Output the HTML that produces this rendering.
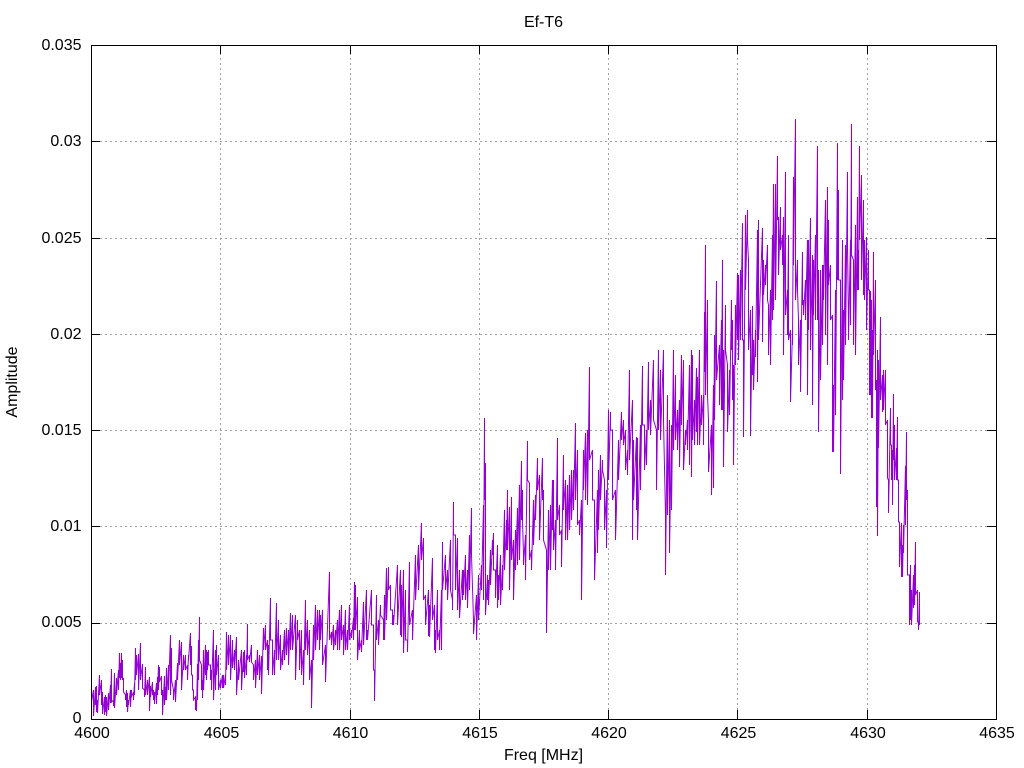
<!DOCTYPE html>
<html><head><meta charset="utf-8"><style>html,body{margin:0;padding:0;background:#fff}svg{display:block}text{font-family:"Liberation Sans",sans-serif;font-size:16px;fill:#000}</style></head><body>
<svg width="1024" height="768" viewBox="0 0 1024 768" xmlns="http://www.w3.org/2000/svg">
<rect width="1024" height="768" fill="#fff"/>
<g stroke="#a0a0a0" stroke-width="1" stroke-dasharray="2 3" fill="none" shape-rendering="crispEdges">
<path d="M100 623.5H988M100 526.5H988M100 430.5H988M100 334.5H988M100 238.5H988M100 141.5H988"/>
<path d="M220.5 710V54M350.5 710V54M479.5 710V54M608.5 710V54M737.5 710V54M867.5 710V54"/>
</g>
<path transform="translate(.5,0)" fill="none" stroke="#9400d3" stroke-width="1" stroke-linejoin="miter" d="M91 672V702L93 690V716L95 687V705L96 686V712L97 700V713L99 675V695L101 680V705L102 692V714L104 697V715L105 695V712L106 697V716L108 693V710L110 685V703L111 669V702L113 700V706L114 673V708L116 678V695L118 670V690L119 653V678L120 663V680L121 653V678L122 660V680L123 678V692L125 695V700L126 690V707L127 693V712L128 700V705L130 690V707L131 690V697L133 692V700L134 683V695L135 648V680L136 655V675L138 654V690L140 643V680L142 664V688L144 690V697L145 667V695L147 680V695L149 677V711L150 686V697L152 682V695L153 690V700L154 692V704L156 683V704L157 677V695L158 665V690L159 667V682L161 676V695L162 690V715L164 676V705L165 687V700L166 668V700L168 665V690L170 635V695L171 648V680L173 690V700L175 680V702L177 663V680L179 640V665L181 642V690L183 655V670L185 655V670L187 665V680L188 655V660L190 633V665L191 646V675L192 675V690L193 690V700L195 697V710L196 700V711L197 664V700L198 640V680L199 617V660L201 665V690L202 680V698L203 650V690L205 645V675L206 650V680L207 652V670L208 650V665L210 665V680L211 670V690L213 630V700L215 650V690L216 645V675L218 655V690L220 680V688L222 675V688L223 675V688L225 675V685L226 632V670L228 635V665L230 635V680L232 640V668L234 650V670L236 637V695L238 660V680L241 650V690L243 652V672L244 650V678L246 655V675L247 624V660L249 655V662L251 645V662L253 665V680L255 660V688L257 650V675L259 655V680L261 656V694L263 628V650L265 625V650L267 640V670L268 645V675L270 598V640L272 640V675L274 650V675L276 603V660L278 620V660L280 635V670L282 650V665L284 630V660L286 628V655L288 630V665L290 613V650L292 615V650L295 615V680L297 620V640L299 630V670L301 630V675L303 650V685L305 600V650L307 620V655L309 630V680L311 660V708L313 625V660L315 605V650L317 610V640L319 610V650L320 615V640L322 610V665L325 645V682L329 572V640L331 632V645L333 625V650L335 630V645L337 620V650L339 610V650L341 605V640L343 625V655L345 610V650L347 630V650L349 605V640L351 630V638L353 618V640L354 582V630L355 585V630L357 597V660L359 630V650L361 640V652L363 602V645L366 590V640L367 630V640L371 590V625L373 625V670L374 670V701L376 595V640L378 620V645L380 605V615L383 620V640L384 595V640L386 568V620L388 567V590L390 585V610L392 610V625L393 615V625L397 565V625L400 570V635L401 585V637L403 570V653L405 590V640L407 640V652L409 562V625L412 610V640L415 555V600L418 545V590L421 523V560L423 538V600L425 595V625L428 590V636L429 605V637L432 558V620L434 605V650L435 630V653L437 590V640L439 630V650L441 590V650L442 542V590L445 555V590L447 570V600L450 540V590L452 600V610L453 502V535L455 535V590L457 538V610L459 570V618L462 570V600L463 570V595L465 555V600L467 570V608L469 535V590L471 508V555L473 620V634L476 595V640L478 575V620L481 565V590L483 505V600L484 418V500L485 463V615L487 575V600L488 580V605L490 550V585L492 540V555L493 533V570L495 570V598L497 545V608L498 575V600L500 555V605L502 565V590L504 510V570L506 520V550L507 490V550L509 507V590L511 497V560L513 540V600L515 530V570L517 508V565L519 485V560L521 461V520L522 490V520L523 555V565L525 535V580L527 441V480L529 483V560L531 550V570L533 500V545L535 495V520L537 458V490L539 475V540L542 458V500L543 490V540L546 550V633L548 510V570L550 505V570L552 480V530L553 480V550L555 520V570L557 438V520L559 505V535L561 530V567L563 455V510L565 480V540L567 485V540L569 475V530L571 470V520L573 470V510L575 423V500L577 450V525L579 520V535L581 500V600L583 450V490L585 433V500L587 430V505L589 367V460L592 450V500L594 500V580L597 490V553L598 470V530L600 455V500L602 460V470L604 480V530L606 490V548L608 410V480L610 412V430L612 430V500L615 490V540L618 440V480L621 412V440L623 420V445L625 430V470L627 450V475L629 370V460L632 400V540L633 440V500L636 437V510L637 438V540L640 425V490L642 366V425L644 425V470L646 430V465L648 362V430L650 400V435L653 360V420L656 430V490L658 350V430L660 370V440L663 350V420L665 515V575L667 395V515L669 420V553L671 425V510L673 350V450L675 375V440L677 410V450L679 400V467L681 355V425L683 360V470L685 430V445L687 420V450L689 365V465L691 350V477L692 355V440L694 400V445L696 368V432L697 377V445L699 350V445L701 395V425L703 395V445L704 312V372L705 245V395L707 300V395L708 420V472L711 425V495L713 385V488L714 335V420L716 281V380L719 345V405L721 320V410L722 260V410L723 350V467L725 305V350L727 365V432L729 370V415L731 300V350L732 320V400L733 365V465L735 305V365L737 273V340L738 275V360L740 270V340L742 223V340L743 340V437L745 215V290L747 210V240L748 260V350L750 310V436L752 306V375L753 340V390L755 330V357L757 230V382L758 220V340L762 228V342L763 260V295L765 265V285L767 245V300L768 305V355L770 290V365L772 235V320L773 184V310L775 184V300L777 156V220L778 217V275L780 207V250L782 235V265L783 217V355L785 172V315L787 290V335L788 235V340L790 330V402L792 330V345L793 177V265L795 119V300L797 260V290L798 320V365L800 320V392L802 252V305L803 300V315L805 280V320L807 240V395L808 240V330L810 218V350L812 255V405L813 260V315L815 235V320L817 146V320L818 270V432L820 270V380L822 265V345L823 265V300L825 200V335L827 187V365L828 220V285L830 265V320L832 315V452L833 385V452L835 290V415L837 143V280L838 190V280L840 280V474L842 240V400L843 310V380L845 245V345L847 172V245L848 320V340L850 240V325L851 124V255L853 260V345L855 225V355L857 197V290L858 250V290L859 146V240L861 175V280L863 200V295L864 240V300L866 237V330L868 250V290L869 290V395L870 291V395L871 300V418L872 330V418L873 252V355L875 280V390L876 380V507L877 350V536L878 360V448L880 317V400L882 375V412L883 370V410L885 370V425L887 420V478L888 480V513L890 408V445L891 445V480L892 450V505L893 394V460L894 425V480L896 448V480L897 417V480L898 480V522L899 522V567L901 523V577L902 545V577L903 525V553L905 466V525L906 432V500L907 490V575L909 575V625L910 565V620L911 590V625L913 575V608L914 565V605L915 542V595L917 590V622L918 622V630L919 592V625"/>
<g stroke="#000" stroke-width="1" fill="none" shape-rendering="crispEdges">
<rect x="91.5" y="45.5" width="905" height="674"/>
<path d="M91 623.5h9M91 526.5h9M91 430.5h9M91 334.5h9M91 238.5h9M91 141.5h9M996 623.5h-9M996 526.5h-9M996 430.5h-9M996 334.5h-9M996 238.5h-9M996 141.5h-9"/>
<path d="M220.5 719v-9M350.5 719v-9M479.5 719v-9M608.5 719v-9M737.5 719v-9M867.5 719v-9M220.5 45v9M350.5 45v9M479.5 45v9M608.5 45v9M737.5 45v9M867.5 45v9"/>
</g>
<g text-anchor="end">
<text x="81.5" y="723">0</text>
<text x="81.5" y="627">0.005</text>
<text x="81.5" y="531">0.01</text>
<text x="81.5" y="435">0.015</text>
<text x="81.5" y="339">0.02</text>
<text x="81.5" y="243">0.025</text>
<text x="81.5" y="146">0.03</text>
<text x="81.5" y="50">0.035</text>
</g>
<g text-anchor="middle">
<text x="92" y="738">4600</text>
<text x="221.5" y="738">4605</text>
<text x="350.5" y="738">4610</text>
<text x="480" y="738">4615</text>
<text x="609" y="738">4620</text>
<text x="738.5" y="738">4625</text>
<text x="868" y="738">4630</text>
<text x="997" y="738">4635</text>
<text x="543.5" y="760">Freq [MHz]</text>
<text x="543.5" y="27">Ef-T6</text>
<text transform="translate(17,382) rotate(-90)">Amplitude</text>
</g>
</svg>
</body></html>
